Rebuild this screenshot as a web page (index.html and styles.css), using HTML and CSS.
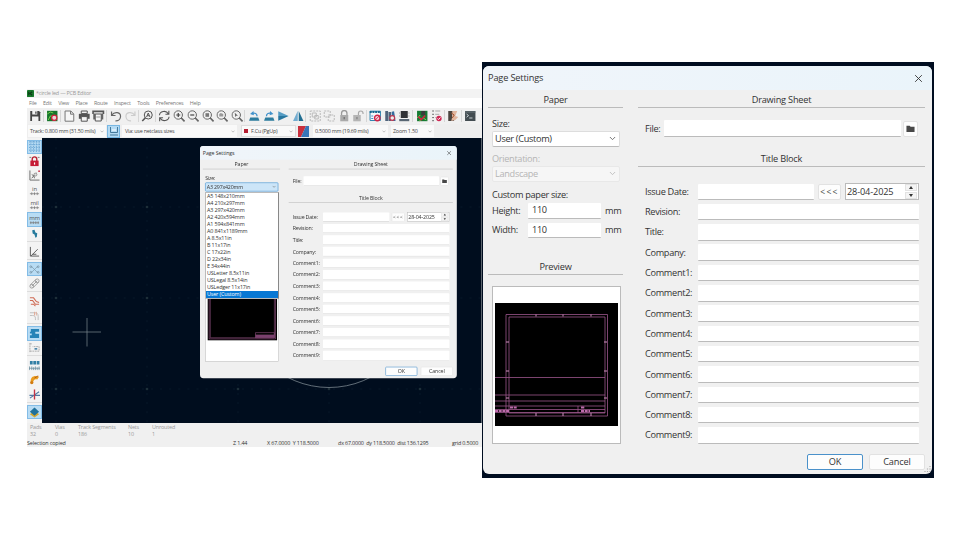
FILE: index.html
```html
<!DOCTYPE html>
<html lang="en">
<head>
<meta charset="utf-8">
<title>PCB Editor - Page Settings</title>
<link rel="stylesheet" href="styles.css">
</head>
<body>
<svg class="defs" width="0" height="0">
  <symbol id="folder" viewBox="0 0 10 8"><path d="M.5.7h3.6l1 1.2h4.4v5.6h-9z" fill="#484848"/></symbol>
  <symbol id="chev" viewBox="0 0 8 5"><path d="M1 .8l3 3 3-3" fill="none" stroke="currentColor" stroke-width="1"/></symbol>
  <symbol id="close" viewBox="0 0 10 10"><path d="M1.3 1.3l7.4 7.4M8.7 1.3L1.3 8.7" stroke="#333" stroke-width="1"/></symbol>
  <symbol id="lens" viewBox="0 0 12 12"><g fill="none" stroke="#666"><circle cx="5" cy="5" r="4.2"/><path d="M8 8L11.3 11.3" stroke-width="1.7"/></g></symbol>
</svg>
<main class="stage">
<section class="app">
  <header class="titlebar"><svg width="8" height="8" viewBox="0 0 8 8"><rect width="8" height="8" rx="1" fill="#17772b"/><path d="M2 2v4M6 2L3.4 4 6 6" stroke="#0b3b14" stroke-width="1.3" fill="none"/></svg><span>*circle led — PCB Editor</span></header>
  <nav class="menubar"><span>File</span><span>Edit</span><span>View</span><span>Place</span><span>Route</span><span>Inspect</span><span>Tools</span><span>Preferences</span><span>Help</span></nav>
  <div class="toolbar">
    <svg viewBox="0 0 12 12"><path d="M1 1h8.8L11 2.3V11H1z" fill="#444"/><path d="M3 1h5v3.4H3zM2.8 6.6h6.4V11H2.8z" fill="#f0f0f0"/><path d="M6 1.4h1.3v2.3H6z" fill="#444"/></svg><i></i>
    <svg viewBox="0 0 12 12"><path d="M.8.8h10.4v10.4H.8z" fill="#16762c"/><path d="M1 4l3-2 3 1M2 10l2-4h3" stroke="#74c94c" fill="none"/><circle cx="8" cy="7.8" r="2.6" fill="#e9d8d8" stroke="#d3203e" stroke-width="1.2"/></svg><i></i>
    <svg viewBox="0 0 12 12"><path d="M1.8 1h5.8L10.5 4v7.2H1.8zM7.3 1v3.2h3" fill="#f6f6f6" stroke="#777"/></svg>
    <svg viewBox="0 0 12 12"><path d="M3 1h6v2.6H3z" fill="none" stroke="#555"/><path d="M.6 3.8h10.8v5H.6z" fill="#555"/><path d="M3 6.6h6v4.6H3z" fill="#f4f4f4" stroke="#555"/></svg>
    <svg viewBox="0 0 12 12"><path d="M.8 4V1.4h10.4V4" fill="none" stroke="#555" stroke-width="1.6"/><path d="M1 3.5h2v6H1zM9 3.5h2v6H9z" fill="#666"/><path d="M3 4h6v7H3z" fill="#f5f5f5" stroke="#555"/><path d="M4 7h4" stroke="#999"/></svg><i></i>
    <svg viewBox="0 0 12 12"><path d="M1.3 1.5v4h4M1.5 5.2C4.5 1 10.5 2.2 10.3 6.7 10 9.6 7.5 11 5.2 10.8" fill="none" stroke="#666" stroke-width="1.2"/></svg>
    <svg viewBox="0 0 12 12"><path d="M10.7 1.5v4h-4M10.5 5.2C7.5 1 1.5 2.2 1.7 6.7 2 9.6 4.5 11 6.8 10.8" fill="none" stroke="#ccc" stroke-width="1.2"/></svg><i></i>
    <svg viewBox="0 0 12 12"><g fill="none" stroke="#555"><circle cx="7" cy="5" r="4"/><path d="M4.2 7.8L1 11" stroke-width="1.6"/><path d="M5.3 7L7 3l1.7 4M6 5.7h2"/></g></svg><i></i>
    <svg viewBox="0 0 12 12"><path d="M1.2 5.3C1.5 1.2 7.8-.1 10 3.7M10.6.8v3.5H7.2M10.8 6.7C10.5 10.8 4.2 12.1 2 8.3M1.4 11.2V7.7h3.4" fill="none" stroke="#555" stroke-width="1.1"/></svg>
    <svg viewBox="0 0 12 12"><use href="#lens"/><path d="M3 5h4M5 3v4" stroke="#444" stroke-width="1.2"/></svg>
    <svg viewBox="0 0 12 12"><use href="#lens"/><path d="M3 5h4" stroke="#444" stroke-width="1.2"/></svg>
    <svg viewBox="0 0 12 12"><use href="#lens"/><path d="M3.2 3.2h3.6v3.6H3.2z" fill="#777"/></svg>
    <svg viewBox="0 0 12 12"><use href="#lens"/><path d="M3 6.6V4l1.5-1 2.5 1v2.6z" fill="#999"/></svg>
    <svg viewBox="0 0 12 12"><use href="#lens"/><path d="M3.5 2.7l3.2 3H5L4 7z" fill="#666"/></svg><i></i>
    <svg viewBox="0 0 12 12"><path d="M2 7.5h8l1.2 3.3H.8z" fill="#2d7c9e"/><path d="M8.8 6.3C8.8 3.5 6.5 2.6 4 3.5" fill="none" stroke="#4191ca" stroke-width="1.3"/><path d="M5.2.9L1.8 4l3.8 1.3z" fill="#4191ca"/></svg>
    <svg viewBox="0 0 12 12"><path d="M2 7.5h8l1.2 3.3H.8z" fill="#2d7c9e"/><path d="M3.2 6.3C3.2 3.5 5.5 2.6 8 3.5" fill="none" stroke="#4191ca" stroke-width="1.3"/><path d="M6.8.9L10.2 4 6.4 5.3z" fill="#4191ca"/></svg>
    <svg viewBox="0 0 12 12"><path d="M1 1.2L11.4 6H1z" fill="#569cc3"/><path d="M1 6h10.4L1 10.8z" fill="#28769f"/></svg>
    <svg viewBox="0 0 12 12"><path d="M5.5 1v10H.8z" fill="#72acd0"/><path d="M6.5 1v10h4.7z" fill="#216e91"/></svg><i></i>
    <svg viewBox="0 0 12 12"><g fill="none" stroke="#bbb"><path d="M1 1h10v10H1z" stroke-dasharray="2 1"/><path d="M3 3h4v4H3zM5.5 5.5H9V9H5.5z"/></g></svg>
    <svg viewBox="0 0 12 12"><g fill="none" stroke="#bbb"><path d="M1 1h6v6H1z" stroke-dasharray="2 1"/><path d="M5 5h6v6H5z" stroke-dasharray="2 1"/></g></svg>
    <svg viewBox="0 0 12 12"><path d="M3.3 5V3.3a2.7 2.7 0 015.4 0V5" fill="none" stroke="#999" stroke-width="1.3"/><path d="M2 5h8v6.3H2z" fill="#aaa"/><path d="M5.3 7h1.4v2.2H5.3z" fill="#777"/></svg>
    <svg viewBox="0 0 12 12"><path d="M6.2 5V3.3a2.3 2.3 0 014.6 0V4" fill="none" stroke="#aaa" stroke-width="1.2"/><path d="M1 5h7.5v6.3H1z" fill="#b5b5b5"/><path d="M4 7h1.4v2.2H4z" fill="#888"/></svg><i></i>
    <svg viewBox="0 0 12 12"><path d="M.8 1.2h10.4v9.3H.8z" fill="#f4f8fb" stroke="#3285b0"/><path d="M.5 2h11" stroke="#17688f" stroke-width="2.2" stroke-dasharray="2 .7"/><path d="M2 6h2M2 8.5h2" stroke="#4191ca"/><circle cx="8" cy="8" r="2.7" fill="#f2d9df" stroke="#cf2347" stroke-width="1.4"/><path d="M6 10l4-4" stroke="#cf2347"/></svg>
    <svg viewBox="0 0 12 12"><path d="M1 1h2.8v10H1zM4.2 2H7v9H4.2z" fill="#51647c"/><path d="M7.5 1.8l2.3-.6L11.3 11H8z" fill="#366d9f"/><circle cx="8" cy="8" r="2.4" fill="#eee" stroke="#bb3850" stroke-width="1.2"/></svg>
    <svg viewBox="0 0 12 12"><path d="M2.5 1h7v7h-7z" fill="#303235"/><path d="M1 9h10v2.2H1z" fill="#586673"/><path d="M.8 3h1M.8 6h1M10.2 3h1M10.2 6h1" stroke="#999"/></svg><i></i>
    <svg viewBox="0 0 12 12"><path d="M.8.8h10.4v10.4H.8z" fill="#167b33"/><path d="M5 1h4v4.5H5z" fill="#3b3c3b"/><path d="M1 8l3-3M3 11l4-3 3 2" stroke="#84ca54" fill="none"/><path d="M2 6.5l3 3 4-4" stroke="#cc2640" stroke-width="1.7" fill="none"/></svg>
    <svg viewBox="0 0 12 12"><path d="M2 1h1.6M2 4.3h1.6M2 7.6h1.6M2 10.7h1.6" stroke="#555"/><path d="M5 1h5M5 4.3h4M5 7.6h1" stroke="#aaa"/><circle cx="8.7" cy="8.5" r="2.7" fill="#cf2854"/><path d="M7.3 8.5l1 1 1.8-2" stroke="#fff" fill="none"/></svg><i></i>
    <svg viewBox="0 0 12 12"><path d="M1 1h5l-1 5 2 5H1z" fill="#4b4540"/><path d="M5 1h5L8 6l3 1-3 3-4 1 1-4z" fill="#e2b7a0"/><path d="M4 3l3 2-2 3" fill="none" stroke="#a85632"/></svg><i></i>
    <svg viewBox="0 0 12 12"><path d="M.8 1h10.4v10H.8z" fill="#434c51"/><path d="M2.3 4l2 1.6-2 1.6M5 8h3.2" stroke="#d5dde0" fill="none" stroke-width=".9"/><path d="M.8 2h10.4" stroke="#697379"/></svg>
  </div>
  <div class="options">
    <div class="opt opt-track">Track: 0.800 mm (31.50 mils)<svg><use href="#chev"/></svg></div>
    <div class="opt-btn"><svg width="10" height="10" viewBox="0 0 10 10"><path d="M1.5 1v5.5h7V1M1 9h8" fill="none" stroke="#45799b"/><path d="M3 4h4" stroke="#fff"/></svg></div>
    <div class="opt opt-via">Via: use netclass sizes<svg><use href="#chev"/></svg></div>
    <div class="opt opt-layer"><b></b>F.Cu (PgUp)<svg><use href="#chev"/></svg></div>
    <div class="pair"><svg width="11" height="11" viewBox="0 0 11 11"><path d="M0 0h8L3 11H0z" fill="#c92f3d"/><path d="M8 0h3v11H3z" fill="#3876b8"/></svg></div>
    <div class="opt opt-grid">0.5000 mm (19.69 mils)<svg><use href="#chev"/></svg></div>
    <div class="opt opt-zoom">Zoom 1.50<svg><use href="#chev"/></svg></div>
  </div>
  <div class="workspace">
    <aside class="tools">
      <div class="on"><svg viewBox="0 0 12 12"><path d="M2 0v12M5 0v12M8 0v12M11 0v12M0 1h12M0 4h12M0 7h12M0 10h12" stroke="#5c9dce" stroke-width=".9" stroke-dasharray="1.6 1"/></svg></div>
      <div><svg viewBox="0 0 12 12"><path d="M3.5 6V3.5a2.5 2.5 0 015 0V6" fill="none" stroke="#b81f32" stroke-width="1.5"/><path d="M1.5 5h9v6h-9z" fill="#c51c36"/><path d="M5.4 7h1.3v2.4H5.4z" fill="#fff"/><path d="M.5 1.5h2M9.5 1.5h2" stroke="#777"/></svg></div>
      <div><svg viewBox="0 0 12 12"><path d="M1 .5V11h10.5M3 9l5-6M6 9a4 4 0 00-3-4" fill="none" stroke="#666"/><circle cx="7" cy="5" r="1.6" fill="#ddd" stroke="#777" stroke-width=".7"/><circle cx="11" cy="1.3" r="1" fill="#cc3049"/></svg></div>
      <div><svg viewBox="0 0 12 12"><text x="6" y="6.7" text-anchor="middle">in</text><path d="M1 9.5h10M3 8v3M6 8v3M9 8v3" stroke="#777" stroke-width=".8"/></svg></div>
      <div><svg viewBox="0 0 12 12"><text x="6" y="7" text-anchor="middle">mil</text><path d="M1 9.5h10M3 8v3M6 8v3M9 8v3" stroke="#777" stroke-width=".8"/></svg></div>
      <div class="on"><svg viewBox="0 0 12 12"><text x="6" y="6.5" text-anchor="middle">mm</text><path d="M1 9.5h10M2 8v3M4.7 8v3M7.4 8v3M10 8v3" stroke="#777" stroke-width=".8"/></svg></div>
      <div><svg viewBox="0 0 12 12"><path d="M3.500 2.500l2.500-.5 1 3 2 .8-.5 4-1.500.7-1-3.500-2-1z" fill="#277b9d"/></svg></div><i></i>
      <div><svg viewBox="0 0 12 12"><path d="M1.5 1v10H11M2 11l7.5-7.5M4 9h4" fill="none" stroke="#555"/></svg></div><i></i>
      <div class="on"><svg viewBox="0 0 12 12"><path d="M2 2l8 8M10 2L2 10" stroke="#7896a9" stroke-width=".7"/><g fill="none" stroke="#7896a9" stroke-width=".8"><circle cx="2" cy="3" r="1"/><circle cx="10" cy="3" r="1"/><circle cx="2" cy="9" r="1"/><circle cx="10" cy="9" r="1"/></g></svg></div>
      <div><svg viewBox="0 0 12 12"><g fill="none" stroke="#999"><circle cx="3" cy="9" r="2"/><circle cx="9" cy="3" r="2"/><path d="M1.5 7.5l6-6M4.5 10.5l6-6M3 9l6-6"/></g></svg></div><i></i>
      <div><svg viewBox="0 0 12 12"><path d="M1 2h4l3 4 3 1M1 5h3l3 4h4M2 9h3l2 2" fill="none" stroke="#cf6b55" stroke-width="1.1"/></svg></div>
      <div><svg viewBox="0 0 12 12"><path d="M1 3h5c3 0 4 1 4 4v4M1 6h3c2 0 3 1 3 3v2" fill="none" stroke="#bbb"/><path d="M6 2v4M8 2v4" stroke="#e0a895"/></svg></div><i></i>
      <div class="on"><svg viewBox="0 0 12 12"><path d="M2 1h9v3.2H7v2h4V11H1V8h2V6H1V4h1z" fill="#2683b7"/><path d="M7 5.2h4" stroke="#bcdced"/></svg></div>
      <div><svg viewBox="0 0 12 12"><path d="M1 1v10M1 2h2M1 10h10V5H4" fill="none" stroke="#aaa" stroke-dasharray="2 .7"/><path d="M6 7.5h3" stroke="#286e9a" stroke-width="1.5"/></svg></div><i></i>
      <div><svg viewBox="0 0 12 12"><path d="M1 1h3v4H1zM4.7 1h3v4h-3zM8.4 1h3v4h-3z" fill="#327fa5"/><path d="M.5 7v4M3 7v4M5 8v3M7 7v4M9 8v3M11 7v4M0 9h12" stroke="#668b9e" stroke-width=".8"/></svg></div>
      <div><svg viewBox="0 0 12 12"><path d="M2 9C1 3 6 1 11 3L9 6C6 5 5 7 4 10z" fill="#e99b1d"/><circle cx="3" cy="9.3" r="1.8" fill="#d27b11"/><path d="M6 4.5L10 2" stroke="#af5a16"/></svg></div>
      <div><svg viewBox="0 0 12 12"><path d="M1 10L11 3M.5 7H12" stroke="#5278a2" stroke-width="1.2"/><path d="M6 .5v11" stroke="#c53245" stroke-width="1.5"/></svg></div><i></i>
      <div class="on"><svg viewBox="0 0 12 12"><path d="M6 4l5 3.8L6 11.5 1 7.8z" fill="#d6a72e"/><path d="M6 .5l5 4.8L6 9.5 1 5.3z" fill="#20719b"/></svg></div>
    </aside>
    <svg class="canvas" width="440" height="285" viewBox="42 138 440 285">
      <defs><pattern id="dots" x="51.5" y="202.5" width="91" height="91" patternUnits="userSpaceOnUse"><path d="M4.5 0v91M0 4.5h91" stroke="#17303d" stroke-width=".7" stroke-dasharray=".8 8.3"/><circle cx="4.5" cy="4.5" r=".8" fill="#56706d"/></pattern></defs>
      <rect x="42" y="138" width="440" height="285" fill="#000d1e"/>
      <rect x="42" y="138" width="440" height="285" fill="url(#dots)"/>
      <path d="M72.5 332h28.5M87 318v28.5" stroke="#7c8990" stroke-width=".7"/>
      <circle cx="329" cy="298" r="89.5" fill="none" stroke="#8b969d" stroke-width=".7"/>
      <path d="M481.5 138v285" stroke="#5c656e"/>
    </svg>
  </div>
  <div class="stats"><div>Pads<br>32</div><div>Vias<br>0</div><div>Track Segments<br>186</div><div>Nets<br>10</div><div>Unrouted<br>1</div></div>
  <footer class="status"><span>Selection copied</span><span>Z 1.44</span><span>X 67.0000&nbsp; Y 118.5000</span><span>dx 67.0000&nbsp; dy 118.5000&nbsp; dist 136.1295</span><span>grid 0.5000</span></footer>

  <div class="popup">
    <div class="dialog dialog-small">
      <div class="caption"><span>Page Settings</span><svg width="9" height="9"><use href="#close"/></svg></div>
      <div class="columns">
        <div class="left">
          <h2>Paper</h2>
          <div class="paper"><label>Size:</label><div class="combo combo-active"><span>A3 297x420mm</span><svg><use href="#chev"/></svg></div></div>
          <div class="preview preview-low"><svg width="122" height="86" viewBox="0 0 122 86"><rect width="122" height="86" fill="#000"/><path d="M3 3h116v80H3zM5 5h112v76H5zM84 72h33v9H84zM84 76h33M90 79h24" fill="none" stroke="#a45d91" stroke-width=".9"/><path d="M84 76h33v5H84z" fill="#7b416e"/></svg></div>
        </div>
        <div class="right">
          <h2>Drawing Sheet</h2>
          <div class="file"><label>File:</label><div class="field"></div><div class="btn folder"><svg width="9" height="7.5"><use href="#folder"/></svg></div></div>
          <h2 class="block">Title Block</h2>
          <div class="form">
            <label>Issue Date:</label><div class="date-row"><div class="field"></div><div class="btn copy">&lt;&lt;&lt;</div><div class="date"><span>28-04-2025</span><div class="spin"><b></b><b></b></div></div></div>
            <label>Revision:</label><div class="field"></div><label>Title:</label><div class="field"></div><label>Company:</label><div class="field"></div>
            <label>Comment1:</label><div class="field"></div><label>Comment2:</label><div class="field"></div><label>Comment3:</label><div class="field"></div>
            <label>Comment4:</label><div class="field"></div><label>Comment5:</label><div class="field"></div><label>Comment6:</label><div class="field"></div>
            <label>Comment7:</label><div class="field"></div><label>Comment8:</label><div class="field"></div><label>Comment9:</label><div class="field"></div>
          </div>
        </div>
      </div>
      <div class="actions"><div class="btn ok">OK</div><div class="btn">Cancel</div></div>
    </div>
    <ul class="list"><li>A5 148x210mm</li><li>A4 210x297mm</li><li>A3 297x420mm</li><li>A2 420x594mm</li><li>A1 594x841mm</li><li>A0 841x1189mm</li><li>A 8.5x11in</li><li>B 11x17in</li><li>C 17x22in</li><li>D 22x34in</li><li>E 34x44in</li><li>USLetter 8.5x11in</li><li>USLegal 8.5x14in</li><li>USLedger 11x17in</li><li class="picked">User (Custom)</li></ul>
  </div>
</section>

<section class="shot">
  <div class="dialog">
    <div class="caption"><span>Page Settings</span><svg width="9" height="9"><use href="#close"/></svg></div>
    <div class="columns">
      <div class="left">
        <h2>Paper</h2>
        <div class="paper">
          <label>Size:</label><div class="combo"><span>User (Custom)</span><svg><use href="#chev"/></svg></div>
          <div class="disabled"><label>Orientation:</label><div class="combo"><span>Landscape</span><svg><use href="#chev"/></svg></div></div>
          <label class="custom">Custom paper size:</label>
          <div class="measure"><label>Height:</label><div class="field">110</div><span>mm</span></div>
          <div class="measure"><label>Width:</label><div class="field">110</div><span>mm</span></div>
        </div>
        <h2 class="preview-head">Preview</h2>
        <div class="preview"><svg width="123" height="123" viewBox="0 0 123 123"><rect width="123" height="123" fill="#000"/><g fill="none" stroke="#9c568c" stroke-width=".8"><path d="M11 11.5h101.500v101.500H11zM14 14h96v96H14z"/><path d="M0 74.500h110M0 92h110M0 98h110M0 103h110M0 106.500h110M0 109.500h110M83 103v7"/></g><path d="M41 11.500v2M68 11.500v2M96 11.500v2M41 110v3M68 110v3M96 110v3M11 39h3M11 68h3M11 95h3M109 39h3M109 68h3M109 95h3" stroke="#cf91bf"/><path d="M0 108h14M15 104.500h7M86 104.500h4M86 108h9" stroke="#bd6cab" stroke-width="2.200" stroke-dasharray="3 .7"/></svg></div>
      </div>
      <div class="right">
        <h2>Drawing Sheet</h2>
        <div class="file"><label>File:</label><div class="field"></div><div class="btn folder"><svg width="9" height="7.5"><use href="#folder"/></svg></div></div>
        <h2 class="block">Title Block</h2>
        <div class="form">
          <label>Issue Date:</label><div class="date-row"><div class="field"></div><div class="btn copy">&lt;&lt;&lt;</div><div class="date"><span>28-04-2025</span><div class="spin"><b></b><b></b></div></div></div>
          <label>Revision:</label><div class="field"></div><label>Title:</label><div class="field"></div><label>Company:</label><div class="field"></div>
          <label>Comment1:</label><div class="field"></div><label>Comment2:</label><div class="field"></div><label>Comment3:</label><div class="field"></div>
          <label>Comment4:</label><div class="field"></div><label>Comment5:</label><div class="field"></div><label>Comment6:</label><div class="field"></div>
          <label>Comment7:</label><div class="field"></div><label>Comment8:</label><div class="field"></div><label>Comment9:</label><div class="field"></div>
        </div>
      </div>
    </div>
    <div class="actions"><div class="btn ok">OK</div><div class="btn">Cancel</div></div>
    <svg class="grip" width="8" height="8" viewBox="0 0 8 8"><path d="M6 1v1M6 3.500v1M6 6v1M3.500 3.500v1M3.500 6v1M1 6v1" stroke="#aaa" stroke-width="1.200"/></svg>
  </div>
</section>
</main>
</body>
</html>
```
FILE: styles.css
```css
* { box-sizing: border-box; }
body { margin: 0; background: #fff; font-family: "Open Sans", "Noto Sans", sans-serif; color: #333; }
svg { display: block; flex: none; }
.defs { position: absolute; }
.stage { width: 960px; height: 540px; display: flex; align-items: flex-start; padding-left: 27px; overflow: hidden; }

/* Editor window */
.app { position: relative; width: 455px; height: 358px; margin-top: 89px; background: #f0f0f0; font-size: 5.4px; letter-spacing: -.14px; line-height: 7px; white-space: nowrap; }
.titlebar { height: 9px; display: flex; align-items: center; gap: 2px; background: #f3f3f3; color: #999; letter-spacing: -.2px; }
.titlebar svg { width: 7px; height: 7px; }
.menubar { height: 10px; display: flex; align-items: center; gap: 6.4px; padding-left: 2px; background: #fff; color: #777; letter-spacing: -.22px; }
.toolbar { height: 16px; display: flex; align-items: center; padding-left: 1px; }
.toolbar svg { width: 14.5px; height: 12px; }
.toolbar i { width: 2.68px; height: 12px; border-left: 1px solid #d6d6d6; }
.options { height: 14px; display: flex; align-items: center; padding-left: 1px; background: #eee; }
.opt { height: 12px; display: flex; align-items: center; background: #f9f9f9; padding: 0 2px; color: #444; letter-spacing: -.22px; }
.opt svg { width: 4px; height: 3px; margin-left: auto; color: #888; }
.opt-track { width: 78px; }
.opt-btn { width: 13px; height: 13px; margin: 0 2px 0 1px; display: grid; place-items: center; background: #b4daf3; border: 1px solid #78b7e3; }
.opt-via { width: 115px; padding-left: 3px; }
.opt-layer { width: 55px; margin-left: 4px; border: 1px solid #ddd; }
.opt-layer b { width: 4px; height: 4px; margin-right: 3px; background: #b51d31; }
.pair { width: 16px; padding-left: 2px; }
.opt-grid { width: 75px; margin-left: 1px; }
.opt-zoom { width: 43px; margin-left: 3px; }
.workspace { height: 285px; display: flex; }
.tools { width: 15px; display: flex; flex-direction: column; padding-top: 1.7px; background: #f3f3f3; }
.tools div { height: 14.5px; flex: none; display: grid; place-items: center; }
.tools svg { width: 11px; height: 11px; }
.tools i { height: 3.1px; border-top: 1px solid #ddd; flex: none; }
.tools text { font-size: 6.5px; fill: #555; }
.tools .on { background: #b8dcf4; border: 1px solid #83bce6; }
.stats { height: 16px; display: grid; grid-template-columns: 25px 23px 50px 24px 40px; padding: 1px 0 0 3px; color: #999; }
.status { height: 8px; display: grid; grid-template-columns: 206px 34px 71px 114px 30px; align-items: center; }
.status span:nth-child(n+4) { letter-spacing: -.17px; }

/* Page settings dialog */
.shot { width: 452px; height: 416px; margin-top: 62px; padding: 4px 0 0 1px; background: #000d20; }
.dialog { position: relative; width: 449px; height: 408px; display: flex; flex-direction: column; background: #f0f0f0; border-radius: 6px; overflow: hidden; font-size: 9.2px; letter-spacing: -.32px; line-height: 12px; white-space: nowrap; }
.caption { height: 24px; flex: none; display: flex; justify-content: space-between; align-items: center; padding: 0 9px 0 5px; background: linear-gradient(90deg, #f0f5fa, #eaf4fa); letter-spacing: -.15px; }
.columns { display: flex; justify-content: space-between; padding: 4px 7px 0 5px; }
.left { width: 135px; }
.right { width: 287px; }
h2 { height: 14px; margin: 0; font: inherit; letter-spacing: -.2px; text-align: center; border-bottom: 1px solid #bbb; }
label { display: block; }
.paper { padding: 9.5px 3px 0 4px; }
.combo { height: 16px; display: flex; align-items: center; justify-content: space-between; padding: 0 3px 0 2px; margin-top: 1px; background: #fff; border: 1px solid #ddd; border-bottom-color: #bbb; border-radius: 2px; }
.combo svg { width: 7px; height: 5px; color: #666; }
.combo-active { background: #cce5f8; border-color: #3c8fcf; }
.disabled { margin-top: 6px; color: #b5b5b5; }
.disabled .combo { background: #f6f6f6; border-color: #e8e8e8; }
.disabled svg { color: #bbb; }
.custom { margin: 7.5px 0 2px; }
.measure { height: 15.5px; display: grid; grid-template-columns: 36px 73px auto; align-items: center; margin-bottom: 4px; }
.measure span { padding-left: 4px; }
.field { height: 16.5px; background: #fff; border-bottom: 1px solid #bbb; border-radius: 1px; padding: 1px 4px; }
.measure .field { height: 15.5px; }
.preview-head { margin-top: 23px; }
.preview { width: 129px; height: 158px; margin: 10.5px 0 0 4px; background: #fff; border: 1px solid #bbb; display: grid; place-items: center; }
.preview > svg { margin-bottom: 1px; }
.preview-low { margin-top: 141px; }
.file { height: 17px; display: flex; align-items: center; margin-top: 12px; padding: 0 7px; }
.file label { width: 19px; }
.file .field { width: 238.5px; }
.btn { height: 16px; display: grid; place-items: center; background: #fdfdfd; border: 1px solid #e2e2e2; border-radius: 2px; letter-spacing: -.15px; }
.folder { width: 15px; margin-left: 2px; }
.block { margin-top: 16px; }
.form { display: grid; grid-template-columns: 53px 221px; grid-auto-rows: 20.3px; align-items: center; margin: 14.7px 0 0 7px; }
.date-row { display: flex; align-items: center; }
.date-row .field { width: 116px; }
.copy { width: 23px; margin: 0 4px; font-size: 8.5px; letter-spacing: 1.3px; color: #444; }
.date { flex: 1; height: 17px; display: flex; align-items: center; justify-content: space-between; padding: 0 1px; background: #fff; border: 1px solid #bbb; letter-spacing: -.15px; }
.spin { width: 12px; display: grid; gap: 1px; }
.spin b { height: 7px; display: grid; place-items: center; background: #f4f4f4; border: 1px solid #e3e3e3; }
.spin b::after { content: ""; border: 2px solid transparent; border-top: 0; border-bottom: 3px solid #333; }
.spin b + b::after { transform: rotate(180deg); }
.actions { display: flex; justify-content: flex-end; gap: 6px; padding-right: 7px; margin-top: 8px; }
.actions .btn { width: 56px; }
.actions .ok { border-color: #4a91ca; }
.grip { position: absolute; right: 0; bottom: 1px; }

/* Dialog opened over the editor, with its paper size list */
.popup { position: absolute; left: 173px; top: 57px; width: 257px; height: 232px; }
.dialog-small { transform: scale(.572, .569); transform-origin: 0 0; }
.dialog-small .columns { padding-top: 3px; }
.dialog-small .actions { margin-top: 9.5px; }
.dialog-small .paper { padding-top: 9.5px; }
.list { position: absolute; left: 5px; top: 45.5px; width: 74px; margin: 0; padding: 0; list-style: none; background: #fff; border: .5px solid #bbb; border-right: 1px solid #888; }
.list li { height: 7.06px; padding-left: 1px; }
.list .picked { background: #0878d4; color: #fff; }
```
